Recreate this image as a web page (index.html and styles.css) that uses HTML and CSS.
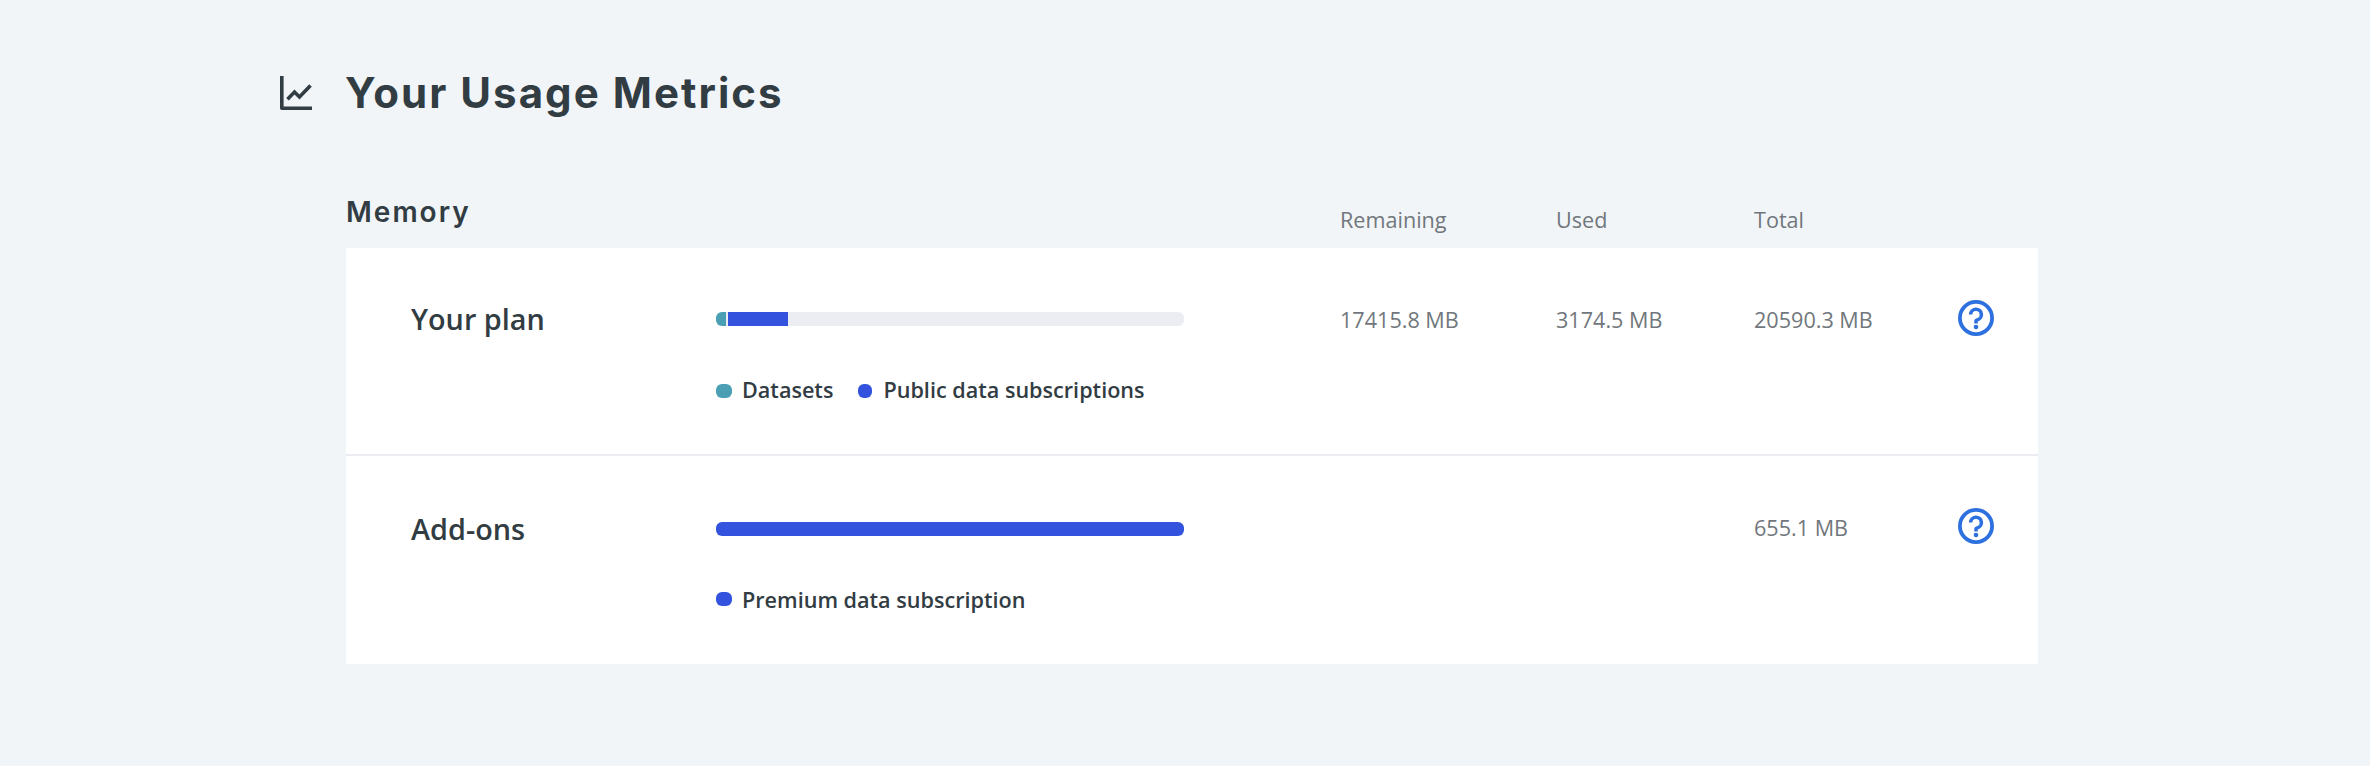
FILE: index.html
```html
<!DOCTYPE html>
<html lang="en">
<head>
<meta charset="utf-8">
<title>Your Usage Metrics</title>
<link rel="stylesheet" href="styles.css">
</head>
<body>
<main class="metrics">
  <header class="page-header">
    <svg class="chart-icon" viewBox="0 0 32 34" fill="none" stroke="currentColor">
      <path d="M1.8 0V32.2H32" stroke-width="3.6" stroke-linejoin="round"/>
      <path d="M7.5 23.2L14.5 16L19.5 21L30.5 9.5" stroke-width="3.6"/>
    </svg>
    <h1 class="title">Your Usage Metrics</h1>
  </header>
  <section class="usage">
    <div class="row heading">
      <h2 class="section-title">Memory</h2>
      <span class="col">Remaining</span>
      <span class="col">Used</span>
      <span class="col">Total</span>
    </div>
    <div class="row card">
      <h3 class="name">Your plan</h3>
      <div class="chart">
        <div class="bar"><i class="segment teal" style="width:10px"></i><i class="segment blue" style="width:60px"></i></div>
        <ul class="legend">
          <li class="item"><i class="dot teal"></i><span class="label">Datasets</span></li>
          <li class="item"><i class="dot blue narrow"></i><span class="label">Public data subscriptions</span></li>
        </ul>
      </div>
      <span class="value">17415.8 MB</span>
      <span class="value">3174.5 MB</span>
      <span class="value">20590.3 MB</span>
      <svg class="help" viewBox="0 0 36 36" fill="none" stroke="currentColor">
        <circle cx="18" cy="18" r="16.1" stroke-width="3.8"/>
        <path d="M12.6 14.6a5.4 5.4 0 1 1 6.4 5.3q-1 .2-1 1.2v2.4" stroke-width="3.6"/>
        <circle cx="18" cy="27" r="2.3" fill="currentColor" stroke="none"/>
      </svg>
    </div>
    <div class="row card">
      <h3 class="name">Add-ons</h3>
      <div class="chart">
        <div class="bar"><i class="segment blue" style="width:100%"></i></div>
        <ul class="legend raised">
          <li class="item"><i class="dot blue"></i><span class="label">Premium data subscription</span></li>
        </ul>
      </div>
      <span class="value"></span>
      <span class="value"></span>
      <span class="value">655.1 MB</span>
      <svg class="help" viewBox="0 0 36 36" fill="none" stroke="currentColor">
        <circle cx="18" cy="18" r="16.1" stroke-width="3.8"/>
        <path d="M12.6 14.6a5.4 5.4 0 1 1 6.4 5.3q-1 .2-1 1.2v2.4" stroke-width="3.6"/>
        <circle cx="18" cy="27" r="2.3" fill="currentColor" stroke="none"/>
      </svg>
    </div>
  </section>
</main>
</body>
</html>
```
FILE: styles.css
```css
* { box-sizing: border-box; }
body {
  margin: 0;
  background: #f1f5f8;
  color: #323c43;
  font-family: "Open Sans", sans-serif;
}
h1, h2, h3, ul { margin: 0; padding: 0; }
.metrics { height: 766px; padding: 66px 332px 0 280px; }
.page-header { display: flex; align-items: flex-start; gap: 33px; height: 116px; }
.chart-icon { width: 32px; height: 34px; margin-top: 10px; }
.title { font: 700 42px/54px Inter, sans-serif; letter-spacing: 2.05px; white-space: nowrap; }
.usage { margin-left: 66px; width: 1692px; }
.row {
  display: grid;
  grid-template-columns: 305px 624px 216px 198px 204px 36px;
  padding-left: 65px;
}
.heading { height: 66px; padding-left: 0; grid-template-columns: 994px 216px 198px 204px; }
.section-title { font: 600 28px/36px Inter, sans-serif; margin-top: 12px; letter-spacing: 2px; }
.col, .value { color: #71777c; font-size: 21.6px; line-height: 30px; white-space: nowrap; }
.col { margin-top: 23px; }
.card { height: 208px; background: #fff; }
.card:last-child { border-top: 2px solid #ecedf3; }
.card + .card { margin-top: -2px; height: 210px; }
.name { margin-top: 51px; font-size: 28.8px; line-height: 40px; font-weight: 600; }
.chart { padding-top: 64px; }
.card + .card .name { margin-top: 53px; }
.card + .card .chart { padding-top: 66px; }
.bar { display: flex; gap: 2px; width: 468px; height: 14px; border-radius: 6px; overflow: hidden; background: #ecedf3; }
.segment { flex-shrink: 0; }
.teal { background: #4a9fb5; }
.blue { background: #3353de; }
.legend { display: flex; gap: 25px; margin-top: 49px; list-style: none; }
.item { display: flex; align-items: center; font-size: 21.6px; line-height: 30px; font-weight: 600; white-space: nowrap; }
.dot { width: 16px; height: 14px; border-radius: 6px; margin-top: 2px; margin-right: 10px; }
.narrow { width: 14px; margin-right: 11px; }
.raised .dot { margin-top: -2px; }
.value { margin-top: 57px; }
.help { width: 36px; height: 36px; margin-top: 52px; color: #2d70df; }
```
